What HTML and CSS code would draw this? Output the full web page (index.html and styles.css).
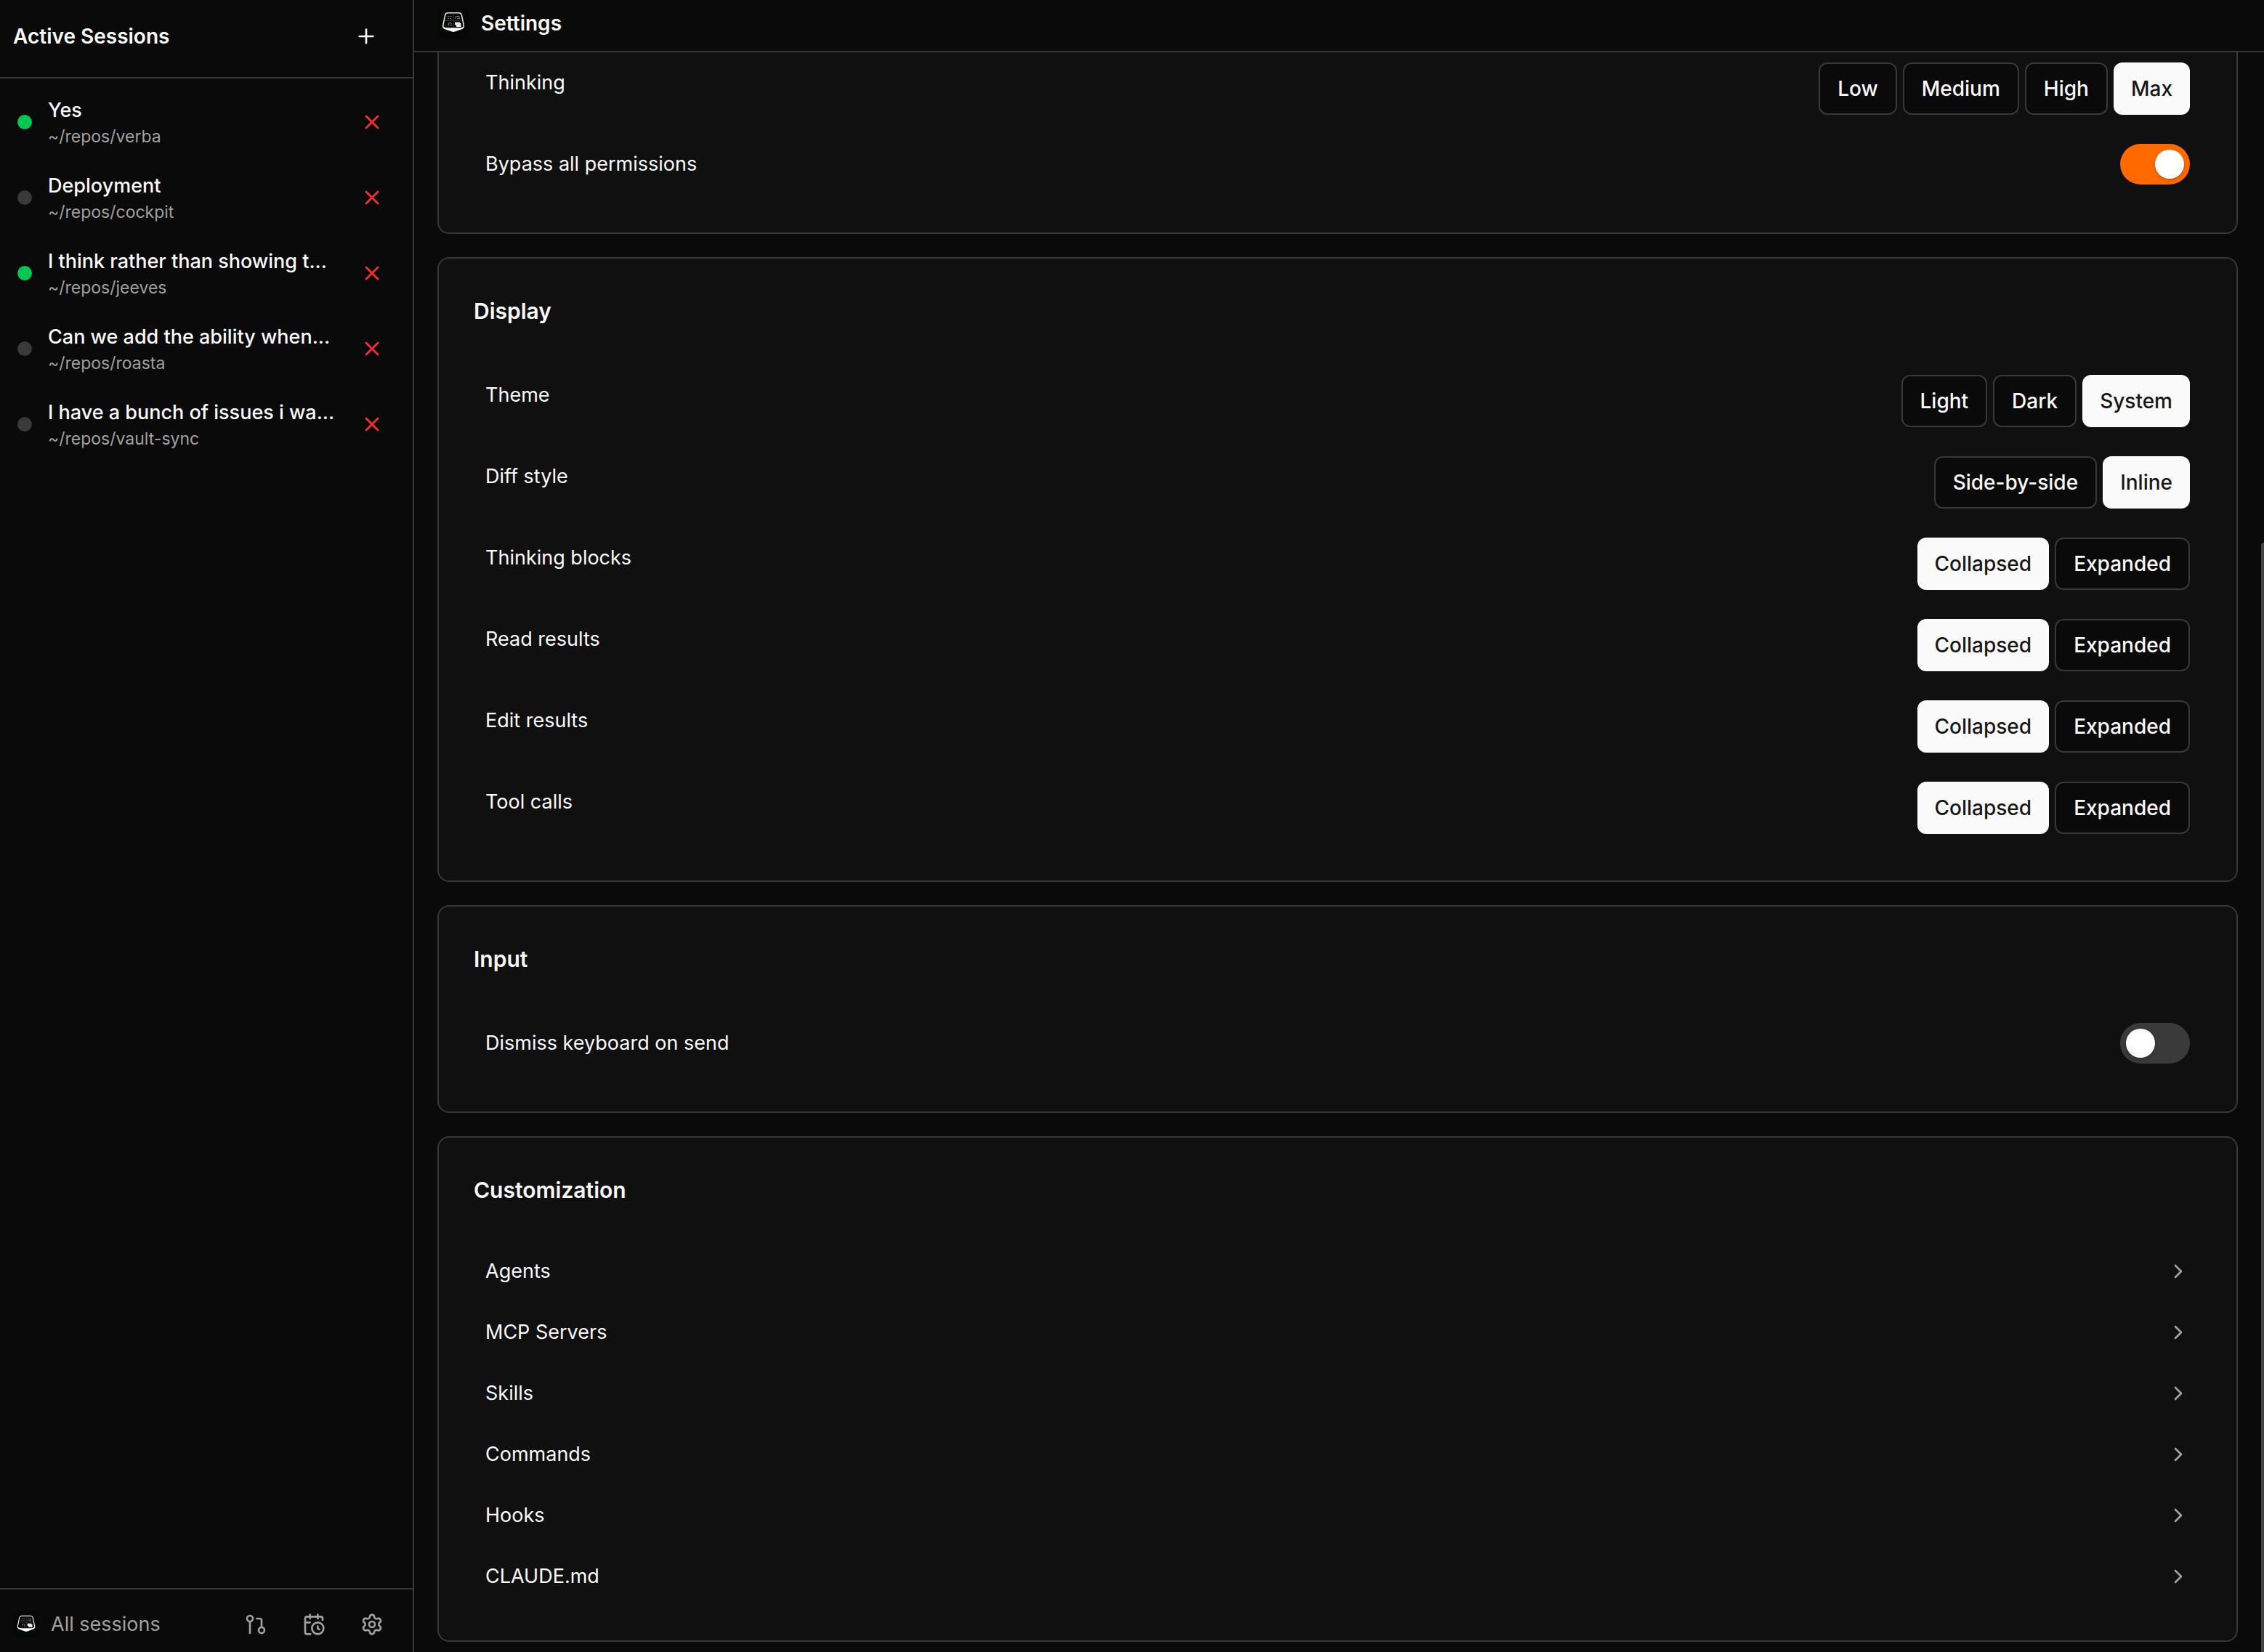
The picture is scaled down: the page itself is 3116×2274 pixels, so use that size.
FILE: index.html
```html
<!DOCTYPE html>
<html lang="en">
<head>
<meta charset="utf-8">
<meta name="viewport" content="width=device-width, initial-scale=1">
<title>Settings</title>
<link rel="stylesheet" href="styles.css">
</head>
<body>
<svg class="sprite" aria-hidden="true">
  <symbol id="logo" viewBox="0 0 44 44">
    <rect width="44" height="44" rx="8" fill="#030a04"/>
    <path d="M14.500 7.800H29.500Q32.500 7.800 33.300 10.500L36.200 24.500Q36.800 28 34 29.300L24 32.800Q22 33.600 20 32.800L10 29.300Q7.200 28 7.800 24.500L10.700 10.500Q11.500 7.800 14.500 7.800Z" fill="#060606" stroke="#e8e8e8" stroke-width="1.500"/>
    <path d="M8.500 27Q10.500 28.300 14 28.300H30Q33.500 28.300 35.500 27L35 29L24 33Q22 33.800 20 33L9 29Z" fill="#fff"/>
    <path d="M22 8.600V28M10 18.300H34" stroke="#3a3a3a" stroke-width="1"/>
    <path d="M14 12.500H16M17 12.500H19.500M14 15.500H16M17 15.500H19M25 16V12.500H30V15.500M27 15.500H31M15.500 26V21.500M15.500 21.800H19V26" stroke="#777" stroke-width="1" fill="none"/>
    <path d="M24 20.500H31V22H32.500V27H26V24.500H24Z" fill="#e8e8e8"/>
  </symbol>
  <symbol id="plus" viewBox="0 0 24 24"><path d="M5 12h14M12 5v14"/></symbol>
  <symbol id="x" viewBox="0 0 24 24"><path d="M18 6 6 18M6 6l12 12"/></symbol>
  <symbol id="chevron" viewBox="0 0 24 24"><path d="m9 18 6-6-6-6"/></symbol>
  <symbol id="pull" viewBox="0 0 24 24"><circle cx="18" cy="18" r="3"/><circle cx="6" cy="6" r="3"/><path d="M13 6h3a2 2 0 0 1 2 2v7M6 9v12"/></symbol>
  <symbol id="calendar" viewBox="0 0 24 24"><path d="M16 14v2.200l1.600 1M16 2v4M21 7.500V6a2 2 0 0 0-2-2H5a2 2 0 0 0-2 2v14a2 2 0 0 0 2 2h3.500M3 10h5M8 2v4"/><circle cx="16" cy="16" r="6"/></symbol>
  <symbol id="gear" viewBox="0 0 24 24"><path d="M9.671 4.136a2.340 2.340 0 0 1 4.659 0 2.340 2.340 0 0 0 3.319 1.915 2.340 2.340 0 0 1 2.330 4.033 2.340 2.340 0 0 0 0 3.831 2.340 2.340 0 0 1-2.330 4.033 2.340 2.340 0 0 0-3.319 1.915 2.340 2.340 0 0 1-4.659 0 2.340 2.340 0 0 0-3.320-1.915 2.340 2.340 0 0 1-2.330-4.033 2.340 2.340 0 0 0 0-3.831A2.340 2.340 0 0 1 6.350 6.051a2.340 2.340 0 0 0 3.319-1.915"/><circle cx="12" cy="12" r="3"/></symbol>
</svg>
<div class="app">
  <aside class="sidebar">
    <header class="sidebar-header">
      <h2 class="title">Active Sessions</h2>
      <button class="icon-button" aria-label="New session"><svg class="icon"><use href="#plus"/></svg></button>
    </header>
    <ul class="sessions">
      <li class="session"><span class="dot dot-live"></span><a class="session-link" href="#"><span class="session-name">Yes</span><span class="session-path">~/repos/verba</span></a><button class="icon-button close" aria-label="Close session"><svg class="icon"><use href="#x"/></svg></button></li>
      <li class="session"><span class="dot"></span><a class="session-link" href="#"><span class="session-name">Deployment</span><span class="session-path">~/repos/cockpit</span></a><button class="icon-button close" aria-label="Close session"><svg class="icon"><use href="#x"/></svg></button></li>
      <li class="session"><span class="dot dot-live"></span><a class="session-link" href="#"><span class="session-name">I think rather than showing t...</span><span class="session-path">~/repos/jeeves</span></a><button class="icon-button close" aria-label="Close session"><svg class="icon"><use href="#x"/></svg></button></li>
      <li class="session"><span class="dot"></span><a class="session-link" href="#"><span class="session-name">Can we add the ability when...</span><span class="session-path">~/repos/roasta</span></a><button class="icon-button close" aria-label="Close session"><svg class="icon"><use href="#x"/></svg></button></li>
      <li class="session"><span class="dot"></span><a class="session-link" href="#"><span class="session-name">I have a bunch of issues i wa...</span><span class="session-path">~/repos/vault-sync</span></a><button class="icon-button close" aria-label="Close session"><svg class="icon"><use href="#x"/></svg></button></li>
    </ul>
    <footer class="sidebar-footer">
      <a class="all-sessions" href="#"><svg class="logo logo-small"><use href="#logo"/></svg>All sessions</a>
      <nav class="tools">
        <button class="icon-button" aria-label="Pull requests"><svg class="icon"><use href="#pull"/></svg></button>
        <button class="icon-button" aria-label="Scheduled"><svg class="icon"><use href="#calendar"/></svg></button>
        <button class="icon-button" aria-label="Settings"><svg class="icon"><use href="#gear"/></svg></button>
      </nav>
    </footer>
  </aside>
  <main class="main">
    <header class="main-header">
      <svg class="logo"><use href="#logo"/></svg>
      <h1 class="title">Settings</h1>
    </header>
    <div class="viewport">
      <div class="cards">
        <section class="card card-continued">
          <div class="rows">
            <div class="row"><span class="label">Thinking</span><div class="choices"><button class="choice">Low</button><button class="choice">Medium</button><button class="choice">High</button><button class="choice active">Max</button></div></div>
            <div class="row row-switch"><label class="label" for="bypass">Bypass all permissions</label><input class="switch" type="checkbox" id="bypass" checked></div>
          </div>
        </section>
        <section class="card">
          <h2 class="card-title">Display</h2>
          <div class="rows">
            <div class="row"><span class="label">Theme</span><div class="choices"><button class="choice">Light</button><button class="choice">Dark</button><button class="choice active">System</button></div></div>
            <div class="row"><span class="label">Diff style</span><div class="choices"><button class="choice">Side-by-side</button><button class="choice active">Inline</button></div></div>
            <div class="row"><span class="label">Thinking blocks</span><div class="choices"><button class="choice active">Collapsed</button><button class="choice">Expanded</button></div></div>
            <div class="row"><span class="label">Read results</span><div class="choices"><button class="choice active">Collapsed</button><button class="choice">Expanded</button></div></div>
            <div class="row"><span class="label">Edit results</span><div class="choices"><button class="choice active">Collapsed</button><button class="choice">Expanded</button></div></div>
            <div class="row"><span class="label">Tool calls</span><div class="choices"><button class="choice active">Collapsed</button><button class="choice">Expanded</button></div></div>
          </div>
        </section>
        <section class="card">
          <h2 class="card-title">Input</h2>
          <div class="rows">
            <div class="row row-switch"><label class="label" for="dismiss">Dismiss keyboard on send</label><input class="switch" type="checkbox" id="dismiss"></div>
          </div>
        </section>
        <section class="card">
          <h2 class="card-title">Customization</h2>
          <nav class="links">
            <a class="link" href="#">Agents<svg class="icon"><use href="#chevron"/></svg></a>
            <a class="link" href="#">MCP Servers<svg class="icon"><use href="#chevron"/></svg></a>
            <a class="link" href="#">Skills<svg class="icon"><use href="#chevron"/></svg></a>
            <a class="link" href="#">Commands<svg class="icon"><use href="#chevron"/></svg></a>
            <a class="link" href="#">Hooks<svg class="icon"><use href="#chevron"/></svg></a>
            <a class="link" href="#">CLAUDE.md<svg class="icon"><use href="#chevron"/></svg></a>
          </nav>
        </section>
      </div>
      <div class="scrollbar"><span></span><span class="thumb"></span></div>
    </div>
  </main>
</div>
</body>
</html>
```
FILE: styles.css
```css
:root {
  --bg: #0a0a0a;
  --card: #101010;
  --line: #383838;
  --text: #fafafa;
  --muted: #a1a1a1;
}
* { box-sizing: border-box; }
body {
  margin: 0;
  background: var(--bg);
  color: var(--text);
  font: 400 27px/40px Inter, "Liberation Sans", sans-serif;
}
h1, h2, ul { margin: 0; padding: 0; }
a { color: inherit; text-decoration: none; }
button { font: inherit; color: inherit; }
.sprite { position: absolute; width: 0; height: 0; }
.app { display: flex; height: 100vh; overflow: hidden; }
.icon {
  display: block;
  width: 32px;
  height: 32px;
  fill: none;
  stroke: currentColor;
  stroke-width: 2;
  stroke-linecap: round;
  stroke-linejoin: round;
}
.icon-button { display: flex; padding: 0; border: 0; background: none; }
.title { font-size: 28px; line-height: 40px; font-weight: 600; }
.logo { width: 44px; height: 44px; flex: none; }
.logo-small { width: 36px; height: 36px; }

.sidebar {
  display: flex;
  flex-direction: column;
  flex: none;
  width: 570px;
  border-right: 2px solid var(--line);
}
.sidebar-header {
  display: flex;
  align-items: center;
  justify-content: space-between;
  padding: 30px 48px 36px 18px;
  border-bottom: 2px solid var(--line);
}
.sessions { flex: 1; padding: 8px 0; list-style: none; }
.session {
  display: flex;
  align-items: center;
  padding: 16px 40px 16px 24px;
}
.dot {
  flex: none;
  width: 20px;
  height: 20px;
  border-radius: 50%;
  background: #3a3a3a;
}
.dot-live { background: #00c950; }
.session-link {
  display: flex;
  flex: 1;
  flex-direction: column;
  min-width: 0;
  margin-left: 22px;
  white-space: nowrap;
}
.session-name { font-weight: 500; }
.session-path { font-size: 23px; line-height: 32px; color: var(--muted); }
.close { color: #fb2c36; }
.sidebar-footer {
  display: flex;
  align-items: center;
  justify-content: space-between;
  height: 88px;
  padding: 10px 40px 0 18px;
  border-top: 2px solid var(--line);
  color: var(--muted);
}
.all-sessions { display: flex; align-items: center; gap: 16px; }
.tools { display: flex; gap: 48px; }

.main { display: flex; flex: 1; flex-direction: column; min-width: 0; }
.main-header {
  display: flex;
  align-items: center;
  gap: 16px;
  padding: 10px 32px 16px;
  border-bottom: 2px solid var(--line);
}
.viewport { display: flex; flex: 1; min-height: 0; overflow: hidden; }
.cards {
  display: flex;
  flex: 1;
  flex-direction: column;
  gap: 32px;
  padding: 0 32px 14px;
}
.card {
  flex: none;
  padding: 48px;
  border: 2px solid var(--line);
  border-radius: 16px;
  background: var(--card);
}
.card-continued {
  padding-top: 0;
  border-top: 0;
  border-top-left-radius: 0;
  border-top-right-radius: 0;
}
.card-title {
  margin-bottom: 48px;
  font-size: 30px;
  line-height: 48px;
  font-weight: 600;
}
.rows { display: flex; flex-direction: column; gap: 8px; }
.row {
  display: flex;
  align-items: flex-start;
  justify-content: space-between;
  padding: 16px;
}
.row-switch { padding-bottom: 18px; }
.card-continued .row:first-child { padding-top: 14px; }
.label { padding-top: 8px; }
.choices { display: flex; gap: 8px; }
.choice {
  height: 72px;
  padding: 0 24px;
  border: 2px solid var(--line);
  border-radius: 12px;
  background: var(--bg);
  font-size: 28px;
  font-weight: 500;
}
.choice.active { border: 0; background: var(--text); color: #171717; }
.switch {
  display: flex;
  appearance: none;
  width: 96px;
  height: 56px;
  margin: 0;
  padding: 8px;
  border-radius: 28px;
  background: #3a3a3a;
}
.switch::before {
  content: "";
  width: 40px;
  height: 40px;
  border-radius: 50%;
  background: #fff;
  box-shadow: 0 2px 4px rgb(0 0 0 / 20%);
}
.switch:checked { justify-content: flex-end; background: #ff6900; }
.links { display: flex; flex-direction: column; gap: 4px; }
.link {
  display: flex;
  align-items: center;
  justify-content: space-between;
  padding: 20px 16px;
}
.link .icon { color: var(--muted); }
.scrollbar { display: grid; grid-template-rows: 675fr 1527fr; width: 4px; }
.thumb { border-radius: 4px 0 0 0; background: #444; }
```
